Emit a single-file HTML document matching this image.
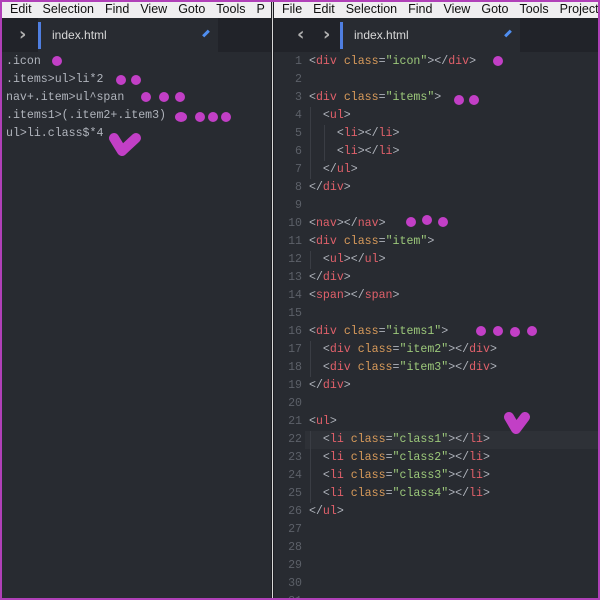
<!DOCTYPE html>
<html><head><style>
*{margin:0;padding:0;box-sizing:border-box}
html,body{width:600px;height:600px;overflow:hidden}
body{background:#282b31;position:relative;font-family:"Liberation Mono",monospace;font-size:11.6px}
.menu{position:absolute;top:0;height:18px;background:#efeef0;font-family:"Liberation Sans",sans-serif;font-size:12.5px;color:#111;white-space:nowrap;overflow:hidden;line-height:18px}
.menu span{margin-right:11px}
.tabbar{position:absolute;top:18px;height:34px;background:#212329}
.tab{position:absolute;top:0;height:34px;background:#282b31;color:#d8d8d8;font-family:"Liberation Sans",sans-serif;font-size:12px;line-height:34px;padding-left:14px}
.bl{position:absolute;left:0;top:4px;width:3px;height:27px;background:#4f7ee0}
.ln{position:absolute;color:#5c6068;width:26px;text-align:right}
.c{position:absolute;white-space:pre;color:#b0b4bc;line-height:18px}
.t{color:#e0606a}.a{color:#d79a5a}.s{color:#9cc87a}
.dot{position:absolute;width:10px;height:10px;border-radius:50%;background:#c23fc6}
.guide{position:absolute;width:1px;background:#3a3d44}
.arr{position:absolute;top:6px;color:#b0b0b0;font-size:18px;font-weight:bold;font-family:'DejaVu Sans'}
</style></head><body>
<div class="menu" style="left:0;width:271px;padding-left:10px"><span>Edit</span><span>Selection</span><span>Find</span><span>View</span><span>Goto</span><span>Tools</span><span>P</span></div>
<div class="menu" style="left:274px;width:326px;padding-left:8px"><span>File</span><span>Edit</span><span>Selection</span><span>Find</span><span>View</span><span>Goto</span><span>Tools</span><span>Project</span></div>
<div style="position:absolute;left:271px;top:0;width:3px;height:600px;background:#1c1d22"></div>
<div style="position:absolute;left:272px;top:0;width:1px;height:600px;background:#d8d8d8"></div>
<div class="tabbar" style="left:0;width:271px"><div class="arr" style="left:19px">›</div>
<div class="tab" style="left:38px;width:180px"><div class="bl"></div>index.html<div style="position:absolute;left:164px;top:14px;width:8px;height:3px;background:#4f8ef0;transform:rotate(-45deg)"></div></div></div>
<div class="tabbar" style="left:274px;width:326px"><div class="arr" style="left:23px">‹</div><div class="arr" style="left:49px">›</div>
<div class="tab" style="left:66px;width:180px"><div class="bl"></div>index.html<div style="position:absolute;left:164px;top:14px;width:8px;height:3px;background:#4f8ef0;transform:rotate(-45deg)"></div></div></div>
<div class="c" style="left:6px;top:53px">.icon
.items>ul>li*2
nav+.item>ul^span
.items1>(.item2+.item3)
ul>li.class$*4</div>
<div class="ln" style="left:276px;top:53px;line-height:18px;white-space:pre">1
2
3
4
5
6
7
8
9
10
11
12
13
14
15
16
17
18
19
20
21
22
23
24
25
26
27
28
29
30
31</div>
<div style="position:absolute;left:305px;top:431px;width:295px;height:18px;background:#2e3137"></div>
<div class="guide" style="left:310px;top:107px;height:72px"></div>
<div class="guide" style="left:324px;top:125px;height:36px"></div>
<div class="guide" style="left:310px;top:251px;height:18px"></div>
<div class="guide" style="left:310px;top:341px;height:36px"></div>
<div class="guide" style="left:310px;top:431px;height:72px"></div>
<div class="c" style="left:309px;top:53px">&lt;<span class="t">div</span> <span class="a">class</span>=<span class="s">"icon"</span>&gt;&lt;/<span class="t">div</span>&gt;

&lt;<span class="t">div</span> <span class="a">class</span>=<span class="s">"items"</span>&gt;
  &lt;<span class="t">ul</span>&gt;
    &lt;<span class="t">li</span>&gt;&lt;/<span class="t">li</span>&gt;
    &lt;<span class="t">li</span>&gt;&lt;/<span class="t">li</span>&gt;
  &lt;/<span class="t">ul</span>&gt;
&lt;/<span class="t">div</span>&gt;

&lt;<span class="t">nav</span>&gt;&lt;/<span class="t">nav</span>&gt;
&lt;<span class="t">div</span> <span class="a">class</span>=<span class="s">"item"</span>&gt;
  &lt;<span class="t">ul</span>&gt;&lt;/<span class="t">ul</span>&gt;
&lt;/<span class="t">div</span>&gt;
&lt;<span class="t">span</span>&gt;&lt;/<span class="t">span</span>&gt;

&lt;<span class="t">div</span> <span class="a">class</span>=<span class="s">"items1"</span>&gt;
  &lt;<span class="t">div</span> <span class="a">class</span>=<span class="s">"item2"</span>&gt;&lt;/<span class="t">div</span>&gt;
  &lt;<span class="t">div</span> <span class="a">class</span>=<span class="s">"item3"</span>&gt;&lt;/<span class="t">div</span>&gt;
&lt;/<span class="t">div</span>&gt;

&lt;<span class="t">ul</span>&gt;
  &lt;<span class="t">li</span> <span class="a">class</span>=<span class="s">"class1"</span>&gt;&lt;/<span class="t">li</span>&gt;
  &lt;<span class="t">li</span> <span class="a">class</span>=<span class="s">"class2"</span>&gt;&lt;/<span class="t">li</span>&gt;
  &lt;<span class="t">li</span> <span class="a">class</span>=<span class="s">"class3"</span>&gt;&lt;/<span class="t">li</span>&gt;
  &lt;<span class="t">li</span> <span class="a">class</span>=<span class="s">"class4"</span>&gt;&lt;/<span class="t">li</span>&gt;
&lt;/<span class="t">ul</span>&gt;</div>
<div class="dot" style="left:52px;top:56px"></div>
<div class="dot" style="left:116px;top:75px"></div><div class="dot" style="left:131px;top:75px"></div>
<div class="dot" style="left:141px;top:92px"></div><div class="dot" style="left:159px;top:92px"></div><div class="dot" style="left:175px;top:92px"></div>
<div class="dot" style="left:175px;top:112px;width:12px"></div><div class="dot" style="left:195px;top:112px"></div><div class="dot" style="left:208px;top:112px"></div><div class="dot" style="left:221px;top:112px"></div>
<svg style="position:absolute;left:108px;top:130px" width="34" height="30"><path d="M6 8 L14 21 L28 8" stroke="#c23fc6" stroke-width="10" fill="none" stroke-linecap="round" stroke-linejoin="round"/></svg>
<div class="dot" style="left:493px;top:56px"></div>
<div class="dot" style="left:454px;top:95px"></div><div class="dot" style="left:469px;top:95px"></div>
<div class="dot" style="left:406px;top:217px"></div><div class="dot" style="left:422px;top:215px"></div><div class="dot" style="left:438px;top:217px"></div>
<div class="dot" style="left:476px;top:326px"></div><div class="dot" style="left:493px;top:326px"></div><div class="dot" style="left:510px;top:327px"></div><div class="dot" style="left:527px;top:326px"></div>
<svg style="position:absolute;left:500px;top:408px" width="34" height="30"><path d="M9 9 L16 21 L25 9" stroke="#c23fc6" stroke-width="10" fill="none" stroke-linecap="round" stroke-linejoin="round"/></svg>
<div style="position:absolute;left:0;top:0;width:600px;height:600px;border:2px solid #b040b8;pointer-events:none"></div>
</body></html>
